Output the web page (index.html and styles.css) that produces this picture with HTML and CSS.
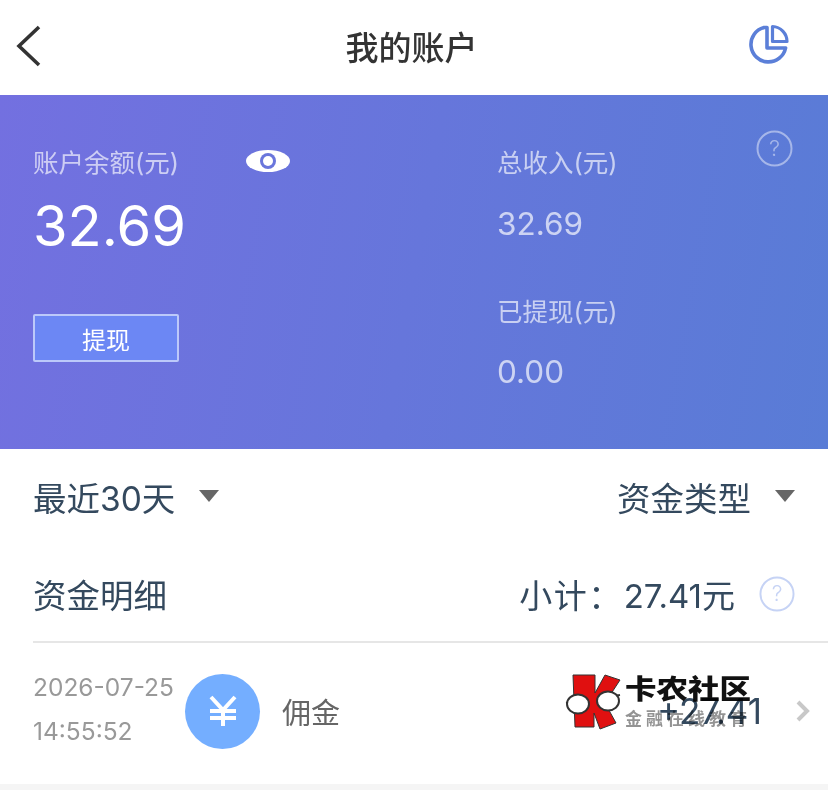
FILE: index.html
```html
<!DOCTYPE html>
<html lang="zh-CN">
<head>
    <meta charset="UTF-8">
    <meta name="viewport" content="width=device-width, initial-scale=1.0">
    <title>我的账户</title>
    <link rel="stylesheet" href="styles.css">
</head>
<body>
    <header class="topbar">
        <svg class="back-icon" width="28" height="44" viewBox="0 0 28 44">
            <path d="M24 3 L4 22 L24 41" fill="none" stroke="#333" stroke-width="3.6"/>
        </svg>
        <h1>我的账户</h1>
        <svg class="chart-icon" width="42" height="42" viewBox="0 0 42 42">
            <path d="M16 4.5 A17.5 17.5 0 1 0 37.6 25 H19 V4.5 Z" fill="none" stroke="#5b7fd8" stroke-width="3.6" stroke-linejoin="round"/>
            <path d="M24.5 3.5 A15 15 0 0 1 39 18.5 H24.5 Z" fill="none" stroke="#5b7fd8" stroke-width="3.2" stroke-linejoin="round"/>
        </svg>
    </header>

    <section class="banner">
        <div class="balance">
            <div class="balance-label">
                <span class="label">账户余额(元)</span>
                <svg class="eye-icon" width="46" height="24" viewBox="0 0 46 24">
                    <ellipse cx="23" cy="12" rx="22" ry="11" fill="#fff"/>
                    <circle cx="23" cy="12" r="8" fill="#6a76dc"/>
                    <circle cx="23" cy="12" r="5" fill="#fff"/>
                </svg>
            </div>
            <div class="amount">32.69</div>
            <button type="button" class="withdraw">提现</button>
        </div>
        <div class="stats">
            <div class="label">总收入(元)</div>
            <div class="stat-value">32.69</div>
            <div class="label stat-second">已提现(元)</div>
            <div class="stat-value">0.00</div>
        </div>
        <svg class="help-icon banner-help" width="37" height="37" viewBox="0 0 37 37">
            <circle cx="18.5" cy="18.5" r="17" fill="none" stroke="currentColor" stroke-width="2"/>
            <text x="18.5" y="26" text-anchor="middle" font-size="22" font-weight="300" fill="currentColor">?</text>
        </svg>
    </section>

    <section class="filters">
        <div class="filter"><span>最近30天</span><i class="arrow"></i></div>
        <div class="filter"><span>资金类型</span><i class="arrow"></i></div>
    </section>

    <section class="detail">
        <div class="detail-head">
            <h2>资金明细</h2>
            <div class="subtotal">
                <span class="subtotal-label">小计：</span><span>27.41元</span>
                <svg class="help-icon" width="36" height="36" viewBox="0 0 37 37">
                    <circle cx="18.5" cy="18.5" r="17" fill="none" stroke="currentColor" stroke-width="2"/>
                    <text x="18.5" y="26" text-anchor="middle" font-size="22" font-weight="300" fill="currentColor">?</text>
                </svg>
            </div>
        </div>
        <div class="record">
            <div class="record-time">
                <div>2026-07-25</div>
                <div>14:55:52</div>
            </div>
            <div class="yen-badge">
                <svg width="30" height="32" viewBox="0 0 30 32">
                    <path d="M3 2 L15 15 L27 2 M15 15 V31 M2 16 H28 M2 23 H28" fill="none" stroke="#fff" stroke-width="4"/>
                </svg>
            </div>
            <div class="record-name">佣金</div>
            <div class="record-amount">+27.41</div>
            <svg class="chevron" width="16" height="24" viewBox="0 0 16 24">
                <path d="M3 3 L12 12 L3 21" fill="none" stroke="#c8c8c8" stroke-width="4"/>
            </svg>
        </div>
    </section>

    <div class="watermark">
        <svg width="58" height="58" viewBox="0 0 58 58">
            <path d="M9 2 H31 V20 L41 2 L56 7 L41 30 L52 50 L36 56 L30 40 V54 H11 Z" fill="#e01010" stroke="#333" stroke-width="1"/>
            <path d="M2 30 L24 28 M33 26 L56 22" stroke="#333" stroke-width="2" fill="none"/>
            <ellipse cx="14" cy="31" rx="11" ry="9.5" fill="#fff" stroke="#333" stroke-width="2"/>
            <ellipse cx="44" cy="28" rx="11" ry="9.5" fill="#fff" stroke="#333" stroke-width="2"/>
        </svg>
        <div class="watermark-text">
            <div class="watermark-name">卡农社区</div>
            <div class="watermark-sub">金融在线教育</div>
        </div>
    </div>
</body>
</html>
```

FILE: styles.css
```css
* {
    box-sizing: border-box;
}

body, h1, h2 {
    margin: 0;
    padding: 0;
}

body {
    position: relative;
    height: 790px;
    overflow: hidden;
    font-family: Inter, "Noto Sans CJK SC", sans-serif;
    background-color: #f5f5f5;
    color: #34495e;
}

/* Top bar */
.topbar {
    position: relative;
    height: 95px;
    display: flex;
    align-items: center;
    justify-content: space-between;
    padding: 0 38px 4px 15px;
    background-color: #fff;
}

.topbar h1 {
    font-family: "Noto Sans CJK SC", sans-serif;
    font-size: 33px;
    font-weight: 500;
    color: #333;
    margin-left: 32px;
}

.chart-icon {
    margin-bottom: 4px;
}

/* Banner */
.banner {
    position: relative;
    height: 354px;
    display: flex;
    padding: 49px 0 0 33px;
    background: linear-gradient(100deg, #7370e0 0%, #597cd6 100%);
    color: #fff;
}

.balance {
    width: 464px;
}

.balance-label {
    display: flex;
    align-items: flex-start;
    gap: 66px;
}

.eye-icon {
    margin-top: 5px;
}

.label {
    font-size: 25.5px;
    line-height: 38px;
    margin-bottom: 2px;
    color: rgba(255, 255, 255, 0.65);
}

.amount {
    font-size: 56px;
    line-height: 68px;
    margin-top: 8px;
}

.withdraw {
    display: block;
    width: 146px;
    height: 48px;
    margin-top: 54px;
    border: 2px solid rgba(255, 255, 255, 0.55);
    border-radius: 2px;
    background-color: #6c87f4;
    color: #fff;
    font-family: "Noto Sans CJK SC", sans-serif;
    font-size: 24px;
}

.stat-value {
    font-size: 31.5px;
    line-height: 40px;
    margin-top: 22px;
    color: rgba(255, 255, 255, 0.68);
}

.stat-second {
    margin-top: 49px;
}

.stat-second + .stat-value {
    margin-top: 21px;
}

.help-icon {
    color: #c6d3f5;
}

.banner-help {
    position: absolute;
    top: 35px;
    right: 35px;
    color: rgba(255, 255, 255, 0.45);
}

/* Filter row */
.filters {
    height: 97px;
    display: flex;
    justify-content: space-between;
    align-items: center;
    padding: 0 33px 3px;
    background-color: #fff;
    font-size: 33.5px;
}

.filter {
    display: flex;
    align-items: center;
    gap: 24px;
}

.arrow {
    width: 0;
    height: 0;
    border-left: 10px solid transparent;
    border-right: 10px solid transparent;
    border-top: 12px solid #666;
}

/* Detail list */
.detail {
    height: 238px;
    padding-left: 33px;
    background-color: #fff;
}

.detail-head {
    height: 97px;
    display: flex;
    justify-content: space-between;
    align-items: center;
    padding: 0 33px 0 0;
    border-bottom: 2px solid #e6e6e6;
}

.detail-head h2 {
    font-size: 33.5px;
    font-weight: 400;
}

.subtotal {
    display: flex;
    align-items: center;
    font-size: 33px;
}

.subtotal-label {
    letter-spacing: 1.5px;
    margin-right: 1px;
}

.subtotal .help-icon {
    margin-left: 24px;
}

.record {
    display: flex;
    align-items: center;
    height: 140px;
    padding: 0 17px 4px 0;
}

.record-time {
    width: 152px;
    margin-bottom: 4px;
    font-size: 24.5px;
    line-height: 44px;
    color: #999;
    white-space: nowrap;
}

.yen-badge {
    width: 75px;
    height: 75px;
    display: flex;
    align-items: center;
    justify-content: center;
    border-radius: 50%;
    background-color: #74aeff;
}

.record-name {
    margin-left: 22px;
    font-size: 29px;
    color: #666;
}

.record-amount {
    margin-left: auto;
    margin-right: 33px;
    font-size: 35px;
}

/* Forum watermark sits over the row */
.watermark {
    position: absolute;
    left: 564px;
    top: 673px;
    display: flex;
    gap: 3px;
    color: #111;
    font-family: "Noto Sans CJK SC", sans-serif;
    mix-blend-mode: multiply;
}

.watermark-name {
    font-size: 31.5px;
    font-weight: 900;
    line-height: 32px;
    transform: scaleY(0.85);
    transform-origin: top;
}

.watermark-sub {
    margin-top: 2px;
    font-size: 17px;
    font-weight: 700;
    line-height: 22px;
    letter-spacing: 4px;
    white-space: nowrap;
    color: rgba(120, 120, 120, 0.8);
}
```
